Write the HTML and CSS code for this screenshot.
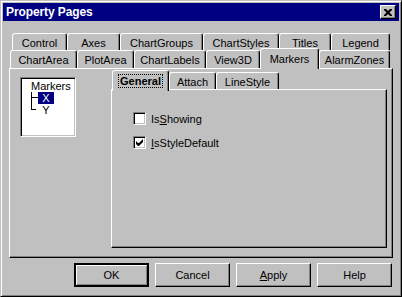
FILE: index.html
```html
<!DOCTYPE html>
<html>
<head>
    <title>Property Pages</title>
    <link rel="stylesheet" href="styles.css">
</head>
<body>
    <div class="window">
        <div class="titlebar">
            <span class="title">Property Pages</span>
            <button class="close-btn">
                <svg width="8" height="7" viewBox="0 0 8 7"><path d="M0 0h2l2 2 2-2h2v1l-2.5 2.5 2.5 2.5v1h-2l-2-2-2 2h-2v-1l2.5-2.5-2.5-2.5z" fill="#000"/></svg>
            </button>
        </div>
        <div class="body">
            <div class="tabrow row-back">
                <div class="tab" style="width:55px">Control</div>
                <div class="tab" style="width:53px">Axes</div>
                <div class="tab" style="width:83px">ChartGroups</div>
                <div class="tab" style="width:76px">ChartStyles</div>
                <div class="tab" style="width:52px">Titles</div>
                <div class="tab" style="width:59px">Legend</div>
            </div>
            <div class="tabrow row-front">
                <div class="tab" style="width:67px">ChartArea</div>
                <div class="tab" style="width:57px">PlotArea</div>
                <div class="tab" style="width:72px">ChartLabels</div>
                <div class="tab" style="width:54px">View3D</div>
                <div class="tab active" style="width:59px">Markers</div>
                <div class="tab" style="width:71px">AlarmZones</div>
            </div>
            <div class="panel">
                <div class="tree">
                    <div class="node root">Markers</div>
                    <div class="node"><span class="elbow mid"></span><span class="label selected">X</span></div>
                    <div class="node"><span class="elbow last"></span><span class="label">Y</span></div>
                </div>
                <div class="subtabs">
                    <div class="tabrow sub-row">
                        <div class="tab active" style="width:57px"><span class="focus">General</span></div>
                        <div class="tab" style="width:47px">Attach</div>
                        <div class="tab" style="width:63px">LineStyle</div>
                    </div>
                    <div class="subpanel">
                        <label class="check"><span class="box"></span>Is<u>S</u>howing</label>
                        <label class="check"><span class="box checked">
                            <svg width="7" height="7" viewBox="0 0 7 7"><path d="M0 2v3l2 2h1l4-4v-3l-4 4h-1z" fill="#000"/></svg>
                        </span><u>I</u>sStyleDefault</label>
                    </div>
                </div>
            </div>
            <div class="buttons">
                <button class="btn default">OK</button>
                <button class="btn">Cancel</button>
                <button class="btn"><u>A</u>pply</button>
                <button class="btn">Help</button>
            </div>
        </div>
    </div>
</body>
</html>
```
FILE: styles.css
```css
body {
    margin: 0;
    font-family: "Liberation Sans", Arial, sans-serif;
    font-size: 11px;
    color: #000;
    background-color: #c0c0c0;
}
.window {
    width: 402px;
    height: 297px;
    box-sizing: border-box;
    background-color: #c0c0c0;
    border: 1px solid;
    border-color: #c0c0c0 #000 #000 #c0c0c0;
    box-shadow: inset 1px 1px #fff, inset -1px -1px #808080;
    padding: 2px;
}
.titlebar {
    height: 18px;
    background-color: #000080;
    color: #fff;
    display: flex;
    align-items: center;
    justify-content: space-between;
    padding: 0 3px 0 3px;
}
.title {
    font-weight: bold;
    font-size: 12px;
    letter-spacing: -0.1px;
}
.close-btn {
    width: 16px;
    height: 14px;
    padding: 0;
    margin: 0;
    background-color: #c0c0c0;
    border: 1px solid;
    border-color: #fff #000 #000 #fff;
    box-shadow: inset -1px -1px #808080;
    display: flex;
    align-items: center;
    justify-content: center;
}
.body {
    padding: 12px 6px 0 6px;
}
.tabrow {
    display: flex;
    height: 17px;
}
.row-back {
    padding-left: 3px;
}
.row-front {
    padding-left: 1px;
    height: 18px;
}
.tab {
    box-sizing: border-box;
    height: 100%;
    border: 1px solid;
    border-bottom: none;
    border-color: #fff #000 #000 #fff;
    border-radius: 3px 3px 0 0;
    box-shadow: inset -1px 0 #808080;
    display: flex;
    align-items: center;
    justify-content: center;
    padding-top: 1px;
    white-space: nowrap;
}
.tabrow .active {
    position: relative;
    z-index: 1;
    height: 21px;
    margin-top: -2px;
    background-color: #c0c0c0;
    padding-bottom: 2px;
}
.panel {
    height: 190px;
    box-sizing: border-box;
    border: 1px solid;
    border-color: #fff #000 #000 #fff;
    box-shadow: inset -1px -1px #808080;
    display: flex;
    align-items: flex-start;
}
.tree {
    width: 56px;
    height: 60px;
    box-sizing: border-box;
    margin: 8px 0 0 10px;
    background-color: #fff;
    border: 1px solid;
    border-color: #808080 #fff #fff #808080;
    box-shadow: inset 1px 1px #000, inset -1px -1px #c0c0c0;
    padding: 2px 0 0 10px;
}
.node {
    height: 12px;
    line-height: 12px;
    display: flex;
}
.elbow {
    flex: none;
    width: 7px;
    height: 12px;
}
.elbow.mid {
    background: linear-gradient(#000, #000) no-repeat 0 0 / 1px 100%,
                linear-gradient(#000, #000) no-repeat 0 5px / 100% 1px;
}
.elbow.last {
    background: linear-gradient(#000, #000) no-repeat 0 0 / 1px 6px,
                linear-gradient(#000, #000) no-repeat 0 5px / 5px 1px;
}
.label {
    flex: none;
    width: 16px;
    text-align: center;
}
.label.selected {
    background-color: #000080;
    color: #fff;
}
.subtabs {
    margin: 1px 0 0 35px;
    width: 276px;
}
.sub-row {
    height: 19px;
    padding-left: 1px;
}
.sub-row .tab {
    height: 17px;
    margin-top: 2px;
}
.sub-row .active {
    height: 21px;
    margin-top: 0;
    font-weight: bold;
}
.focus {
    outline: 1px dotted #000;
    padding: 0 1px;
    line-height: 12px;
}
.subpanel {
    height: 159px;
    box-sizing: border-box;
    border: 1px solid;
    border-color: #fff #000 #000 #fff;
    box-shadow: inset -1px -1px #808080;
    padding: 22px 0 0 21px;
}
.check {
    display: flex;
    align-items: center;
    height: 13px;
    margin-bottom: 11px;
}
.box {
    width: 13px;
    height: 13px;
    box-sizing: border-box;
    background-color: #fff;
    border: 1px solid;
    border-color: #808080 #fff #fff #808080;
    box-shadow: inset 1px 1px #000, inset -1px -1px #c0c0c0;
    margin-right: 5px;
    display: flex;
    align-items: center;
    justify-content: center;
}
.buttons {
    display: flex;
    justify-content: flex-end;
    gap: 6px;
    margin-top: 5px;
    padding-right: 1px;
}
.btn {
    width: 75px;
    height: 24px;
    box-sizing: border-box;
    font-family: "Liberation Sans", Arial, sans-serif;
    font-size: 11px;
    color: #000;
    background-color: #c0c0c0;
    border: 1px solid;
    border-color: #fff #000 #000 #fff;
    box-shadow: inset -1px -1px #808080;
    padding: 0;
    margin: 0;
}
.btn.default {
    border: 2px solid #000;
    box-shadow: inset 1px 1px #fff, inset -1px -1px #808080;
}
```
